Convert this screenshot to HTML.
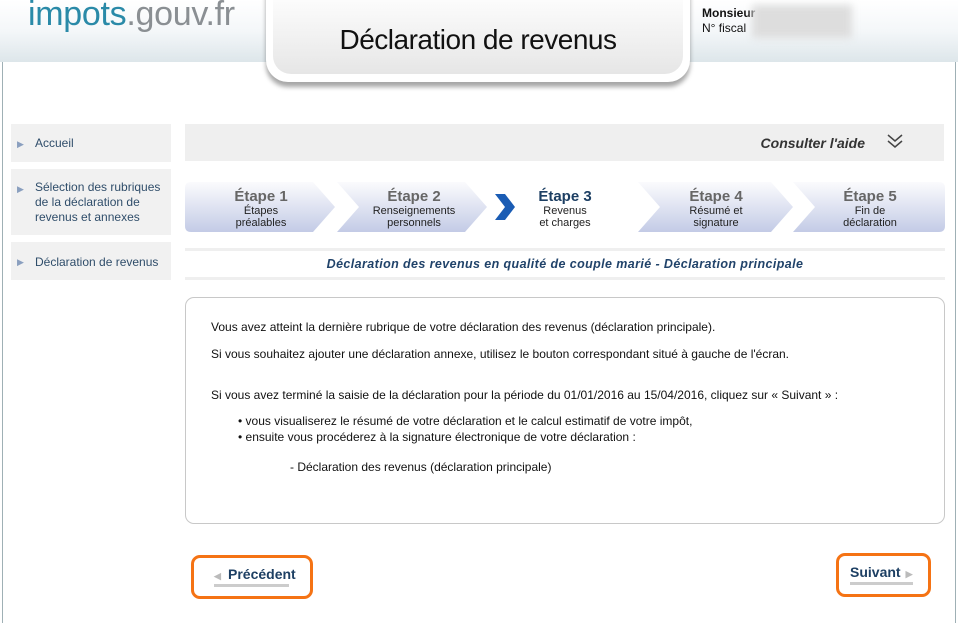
<!DOCTYPE html>
<html><head><meta charset="utf-8"><style>
body{margin:0;width:958px;height:623px;background:#fff;font-family:"Liberation Sans",sans-serif;position:relative;overflow:hidden}
.abs{position:absolute}
#hdr{left:0;top:0;width:958px;height:62px;background:linear-gradient(#fff 0%,#f4f7f9 50%,#dde6ea 100%)}
#lb{left:2px;top:62px;width:1px;height:561px;background:#9fb0b5}
#rb{left:955px;top:62px;width:1px;height:561px;background:#9fb0b5}
#logo{left:28px;top:-5px;font-size:34px;letter-spacing:-0.3px;color:#2a8aa8}
#logo span{color:#8a8f93}
#tbox{left:266px;top:-10px;width:424px;height:92px;background:#fff;border-radius:0 0 22px 22px;box-shadow:0 5px 5px rgba(0,0,0,.35)}
#tin{left:273px;top:-10px;width:410px;height:84px;border-radius:0 0 18px 18px;background:linear-gradient(#fff,#e6e6e6);font-size:28px;text-align:center;line-height:100px;color:#111;letter-spacing:-0.5px}
#user{left:702px;top:6px;font-size:12px;line-height:15px;color:#111}
#blur{left:752px;top:5px;width:100px;height:33px;background:#ddd;filter:blur(4px)}
.side{left:11px;width:160px;background:#f1f1f1;font-size:12px;color:#2f4d6a;line-height:15px}
.side i{position:absolute;left:6px;top:0;font-style:normal;color:#8a9fbf;font-size:9px}
#aide{left:185px;top:124px;width:759px;height:37px;background:#efefef}
#aide b{position:absolute;right:79px;top:11px;font-size:14px;font-style:italic;color:#333}
.st{position:absolute;top:0;height:50px;text-align:center;font-size:11px;line-height:12px;color:#222}
.st b{display:block;font-size:15px;line-height:17px;margin-top:6px;color:#666}
#sub{left:185px;top:248px;width:760px;height:32px;border-top:3px solid #efefef;border-bottom:3px solid #efefef;box-sizing:border-box;text-align:center;font-size:12.5px;letter-spacing:0.4px;font-style:italic;font-weight:bold;color:#21436a;line-height:27px}
#box{left:185px;top:297px;width:758px;height:225px;border:1px solid #c8c8c8;border-radius:9px;font-size:12px;color:#111}
#box p{position:absolute;margin:0;left:25px}
.btn{border:3px solid #f57314;border-radius:9px;height:38px;top:555px}
.btn span{position:absolute;top:8px;font-size:14px;font-weight:bold;color:#1d3f63;border-bottom:3px solid #ccc;padding-bottom:2px;line-height:16px}
</style></head><body>
<div class="abs" id="hdr"></div><div class="abs" id="lb"></div><div class="abs" id="rb"></div>
<div class="abs" id="logo">impots<span>.gouv.fr</span></div>
<div class="abs" id="tbox"></div><div class="abs" id="tin">Déclaration de revenus</div>
<div class="abs" id="user"><b>Monsieur</b><br>N° fiscal</div><div class="abs" id="blur"></div>
<div class="abs side" style="top:124px;height:38px"><i style="top:13px">▶</i><div style="position:absolute;left:24px;top:12px">Accueil</div></div>
<div class="abs side" style="top:169px;height:66px"><i style="top:13px">▶</i><div style="position:absolute;left:24px;top:11px">Sélection des rubriques<br>de la déclaration de<br>revenus et annexes</div></div>
<div class="abs side" style="top:242px;height:38px"><i style="top:13px">▶</i><div style="position:absolute;left:24px;top:13px">Déclaration de revenus</div></div>
<div class="abs" id="aide"><b>Consulter l'aide</b>
<svg style="position:absolute;right:40px;top:8px" width="18" height="18" viewBox="0 0 18 18" fill="none" stroke="#444" stroke-width="1.5"><path d="M2 3l7 6 7-6M2 9l7 6 7-6"/></svg></div>
<svg class="abs" style="left:185px;top:182px" width="760" height="50">
<defs><linearGradient id="g" x1="0" y1="0" x2="0" y2="1"><stop offset="0" stop-color="#fbfbfd"/><stop offset="1" stop-color="#c3cbe6"/></linearGradient></defs>
<path d="M6 0H128L150 25 128 50H6Q0 50 0 44V6Q0 0 6 0Z" fill="url(#g)"/>
<path d="M152 0H280L302 25 280 50H152L174 25Z" fill="url(#g)"/>
<path d="M310 12h10l10 13-10 13h-10l10-13z" fill="#1a5cb4"/>
<path d="M453 0H586L608 25 586 50H453L475 25Z" fill="url(#g)"/>
<path d="M608 0H754Q760 0 760 6V44Q760 50 754 50H608L630 25Z" fill="url(#g)"/>
</svg>
<div class="abs st" style="left:212px;width:98px;top:182px"><b>Étape 1</b>Étapes<br>préalables</div>
<div class="abs st" style="left:362px;width:104px;top:182px"><b>Étape 2</b>Renseignements<br>personnels</div>
<div class="abs st" style="left:520px;width:90px;top:182px"><b style="color:#1d3f63">Étape 3</b>Revenus<br>et charges</div>
<div class="abs st" style="left:666px;width:100px;top:182px"><b>Étape 4</b>Résumé et<br>signature</div>
<div class="abs st" style="left:818px;width:104px;top:182px"><b>Étape 5</b>Fin de<br>déclaration</div>
<div class="abs" id="sub">Déclaration des revenus en qualité de couple marié - Déclaration principale</div>
<div class="abs" id="box">
<p style="top:22px">Vous avez atteint la dernière rubrique de votre déclaration des revenus (déclaration principale).</p>
<p style="top:49px">Si vous souhaitez ajouter une déclaration annexe, utilisez le bouton correspondant situé à gauche de l'écran.</p>
<p style="top:90px">Si vous avez terminé la saisie de la déclaration pour la période du 01/01/2016 au 15/04/2016, cliquez sur « Suivant » :</p>
<p style="top:116px;left:52px">• vous visualiserez le résumé de votre déclaration et le calcul estimatif de votre impôt,</p>
<p style="top:132px;left:52px">• ensuite vous procéderez à la signature électronique de votre déclaration :</p>
<p style="top:162px;left:104px">- Déclaration des revenus (déclaration principale)</p>
</div>
<div class="abs btn" style="left:191px;width:116px"><span style="left:20px;width:61px;padding-left:14px"><i style="position:absolute;left:0;top:2px;font-size:9px;color:#bbb;font-style:normal">◀</i>Précédent</span></div>
<div class="abs btn" style="left:836px;width:89px;top:553px"><span style="left:11px;padding-right:12px">Suivant<i style="position:absolute;right:0;top:2px;font-size:9px;color:#bbb;font-style:normal">▶</i></span></div>
</body></html>
